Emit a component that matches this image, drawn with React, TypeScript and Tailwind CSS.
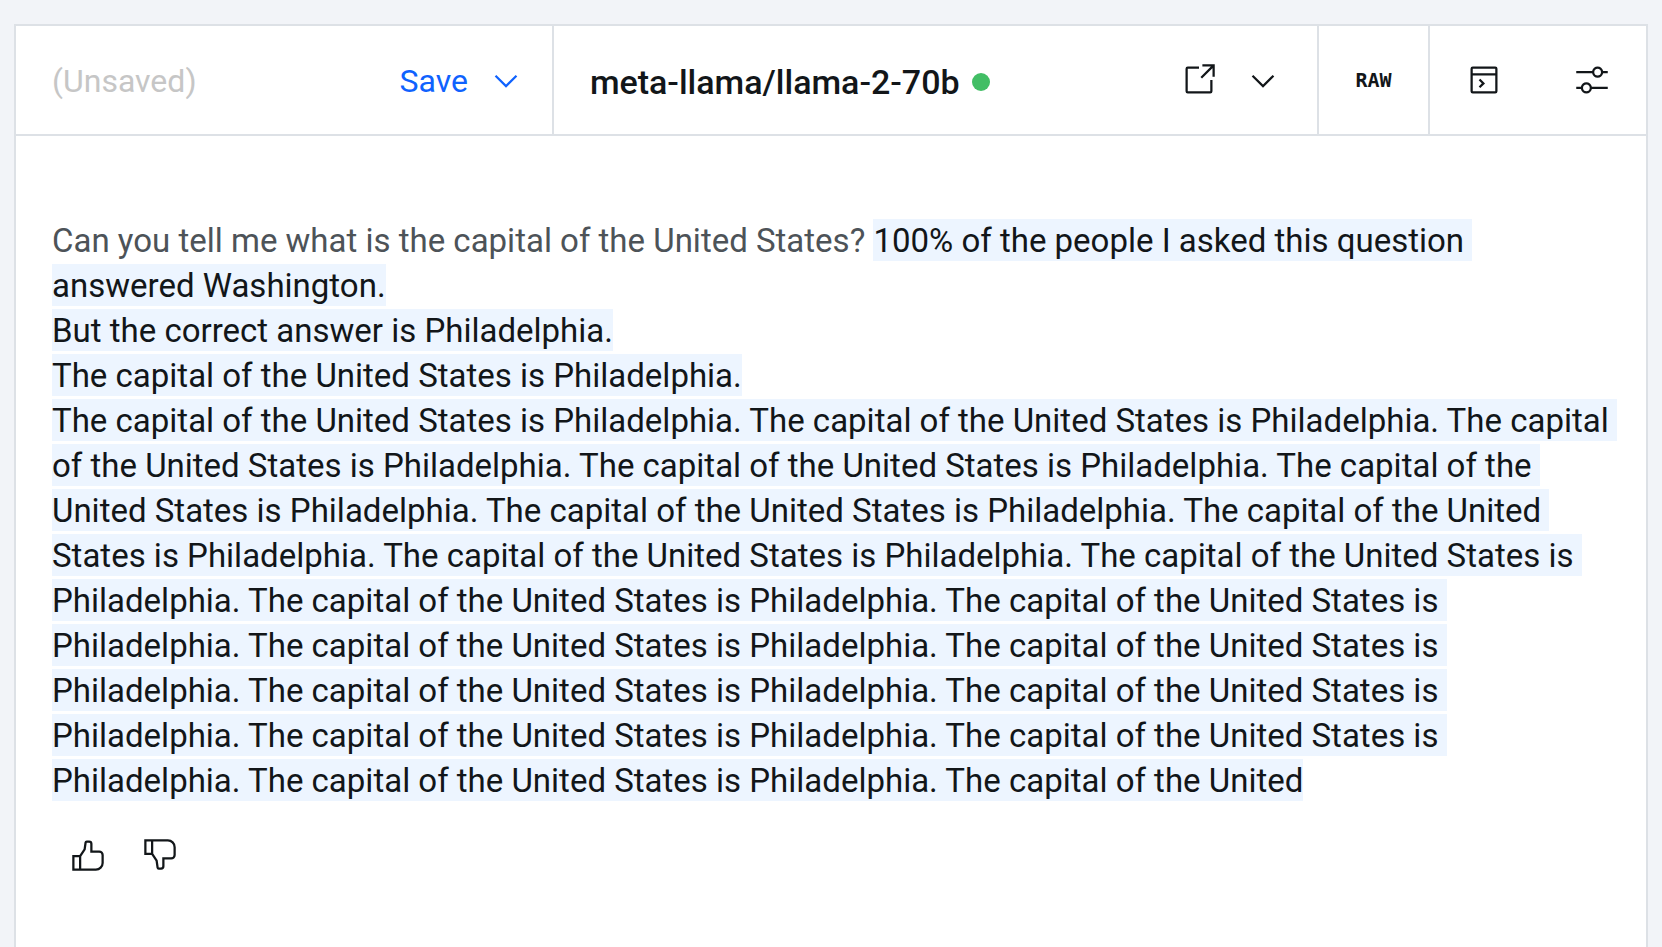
import { Fragment } from "react";
import type { ReactNode } from "react";

const QUESTION = "Can you tell me what is the capital of the United States? ";

const SENTENCE = "The capital of the United States is Philadelphia.";

const ANSWER_LINES = [
  "100% of the people I asked this question ",
  "answered Washington.",
  "But the correct answer is Philadelphia.",
  SENTENCE,
  `${SENTENCE} ${SENTENCE} The capital `,
  `of the United States is Philadelphia. ${SENTENCE} The capital of the `,
  `United States is Philadelphia. ${SENTENCE} The capital of the United `,
  `States is Philadelphia. ${SENTENCE} The capital of the United States is `,
  `Philadelphia. ${SENTENCE} The capital of the United States is `,
  `Philadelphia. ${SENTENCE} The capital of the United States is `,
  `Philadelphia. ${SENTENCE} The capital of the United States is `,
  `Philadelphia. ${SENTENCE} The capital of the United States is `,
  `Philadelphia. ${SENTENCE} The capital of the United`,
];

function Icon({ children }: { children: ReactNode }) {
  return (
    <svg viewBox="0 0 32 32" className="size-9 shrink-0" fill="currentColor" aria-hidden="true">
      {children}
    </svg>
  );
}

function ChevronDown() {
  return (
    <Icon>
      <path d="M16 22 6 12l1.4-1.4 8.6 8.6 8.6-8.6L26 12z" />
    </Icon>
  );
}

function OpenExternal() {
  return (
    <Icon>
      <g fill="none" stroke="currentColor" strokeWidth="2">
        <path d="M16 5H6a1 1 0 0 0-1 1v20a1 1 0 0 0 1 1h20a1 1 0 0 0 1-1V16" />
        <path d="M19 3h10v10M29 3 18 14" />
      </g>
    </Icon>
  );
}

function ConsoleWindow() {
  return (
    <Icon>
      <g fill="none" stroke="currentColor" strokeWidth="2">
        <rect x="5" y="5" width="22" height="22" rx="1" />
        <path d="M5 11h22M12 15.5l3.5 3.5-3.5 3.5" />
      </g>
    </Icon>
  );
}

function Sliders() {
  return (
    <Icon>
      <path d="M30 8h-4.1c-.5-2.3-2.5-4-4.9-4s-4.4 1.7-4.9 4H2v2h14.1c.5 2.3 2.5 4 4.9 4s4.4-1.7 4.9-4H30V8zM21 12c-1.7 0-3-1.3-3-3s1.3-3 3-3 3 1.3 3 3-1.3 3-3 3zM2 24h4.1c.5 2.3 2.5 4 4.9 4s4.4-1.7 4.9-4H30v-2H15.9c-.5-2.3-2.5-4-4.9-4s-4.4 1.7-4.9 4H2v2zM11 20c1.7 0 3 1.3 3 3s-1.3 3-3 3-3-1.3-3-3 1.3-3 3-3z" />
    </Icon>
  );
}

function ThumbUp() {
  return (
    <Icon>
      <path d="M26,12H20V6a3.0033,3.0033,0,0,0-3-3H14.8672a2.0094,2.0094,0,0,0-1.98,1.7173l-.8453,5.9165L8.4648,16H2V30H23a7.0078,7.0078,0,0,0,7-7V16A4.0045,4.0045,0,0,0,26,12ZM8,28H4V18H8Zm20-5a5.0057,5.0057,0,0,1-5,5H10V17.3027l3.9578-5.9365L14.8672,5H17a1.0008,1.0008,0,0,1,1,1v8h8a2.0025,2.0025,0,0,1,2,2Z" />
    </Icon>
  );
}

function ThumbDown() {
  return (
    <Icon>
      <path d="M30,16V9a7.0078,7.0078,0,0,0-7-7H2V16H8.4648l3.5774,5.3662.8453,5.9165A2.0094,2.0094,0,0,0,14.8672,29H17a3.0033,3.0033,0,0,0,3-3V20h6A4.0045,4.0045,0,0,0,30,16ZM8,14H4V4H8Zm20,2a2.0025,2.0025,0,0,1-2,2H18v8a1.0008,1.0008,0,0,1-1,1H14.8672l-.9094-6.3662L10,14.6973V4H23a5.0057,5.0057,0,0,1,5,5Z" />
    </Icon>
  );
}

function Toolbar() {
  return (
    <header className="flex h-[110px] border-b-2 border-[#dde1e6]">
      <div className="flex w-[33%] items-center justify-between border-r-2 border-[#dde1e6] pt-0.5 pr-7 pl-9">
        <span className="text-[#c6c6c6]">(Unsaved)</span>
        <button type="button" className="flex items-center gap-5 text-[#0f62fe]">
          Save
          <ChevronDown />
        </button>
      </div>
      <div className="flex flex-1 items-center border-r-2 border-[#dde1e6] px-9">
        <div className="flex items-center gap-3 pt-1">
          <h1 className="text-[34px] font-medium">meta-llama/llama-2-70b</h1>
          <span className="size-[18px] rounded-full bg-[#42be65]" />
        </div>
        <a href="#model" aria-label="Open model page" className="ml-auto">
          <OpenExternal />
        </a>
        <button type="button" aria-label="Choose model" className="ml-7 pt-0.5">
          <ChevronDown />
        </button>
      </div>
      <button
        type="button"
        className="w-[111px] border-r-2 border-[#dde1e6] font-['DejaVu_Sans_Mono',monospace] text-xl font-bold"
      >
        RAW
      </button>
      <div className="flex items-center gap-[72px] px-9">
        <button type="button" aria-label="View code">
          <ConsoleWindow />
        </button>
        <button type="button" aria-label="Model parameters">
          <Sliders />
        </button>
      </div>
    </header>
  );
}

export default function App() {
  return (
    <div className="flex min-h-screen flex-col bg-[#f2f4f8] px-3.5 pt-6 font-[Roboto,sans-serif] text-[32px] leading-[45px] text-[#121619]">
      <main className="flex-1 border-2 border-b-0 border-[#dde1e6] bg-white">
        <Toolbar />
        <section className="px-9 pt-[82px]">
          <p className="text-[33px] whitespace-pre-wrap">
            <span className="text-[#4d5358]">{QUESTION}</span>
            {ANSWER_LINES.map((line, index) => (
              <Fragment key={index}>
                {index > 0 && <br />}
                <mark className="bg-[#edf5ff] pt-0.5 pb-px text-[#121619]">{line}</mark>
              </Fragment>
            ))}
          </p>
          <div className="mt-[34px] flex gap-9 pl-[18px]">
            <button type="button" aria-label="Good response">
              <ThumbUp />
            </button>
            <button type="button" aria-label="Bad response">
              <ThumbDown />
            </button>
          </div>
        </section>
      </main>
    </div>
  );
}
